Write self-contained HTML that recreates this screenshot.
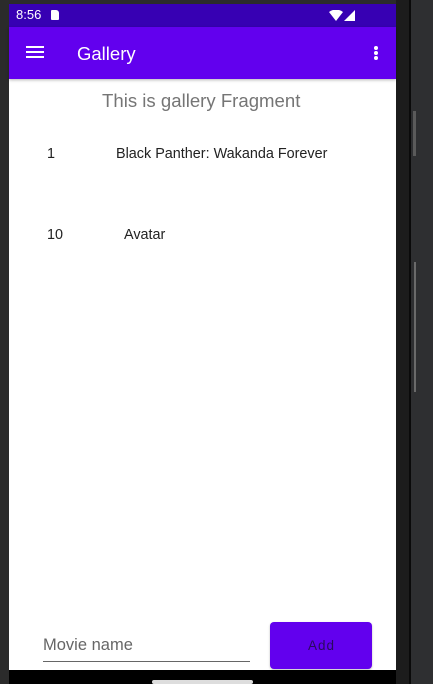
<!DOCTYPE html>
<html><head><style>
body{margin:0;width:433px;height:684px;background:#2b2b2b;position:relative;overflow:hidden;font-family:"Liberation Sans",Roboto,sans-serif}
div{position:absolute}
.t{white-space:nowrap}
</style></head><body>
<div style="left:0;top:0;width:9px;height:684px;background:#2b2b2b"></div>
<div style="left:396px;top:0;width:13px;height:684px;background:#1c1c1c"></div>
<div style="left:409px;top:0;width:2px;height:684px;background:#0a0a0a"></div>
<div style="left:411px;top:0;width:22px;height:684px;background:#2e2f31"></div>
<div style="left:413px;top:111px;width:3px;height:45px;background:#5a5a5a"></div>
<div style="left:414px;top:262px;width:2px;height:130px;background:#6a6a6a"></div>
<div style="left:9px;top:4px;width:387px;height:666px;background:#fff"></div>
<div style="left:9px;top:4px;width:387px;height:23px;background:#3700b3"></div>
<div class="t" style="left:16px;top:7px;color:#fff;font-size:13px">8:56</div>
<div style="left:51px;top:10px;width:8px;height:10px;background:#fff;border-radius:1px 3px 1px 1px"></div>
<svg style="position:absolute;left:329px;top:10px" width="28" height="12"><path d="M0 2 Q7 -3 14 2 L7 11Z" fill="#fff"/><path d="M26 0 L26 11 L15 11Z" fill="#fff"/></svg>
<div style="left:9px;top:27px;width:387px;height:52px;background:#6200ee;box-shadow:0 1px 3px rgba(0,0,0,.3)"></div>
<div style="left:26px;top:46px;width:18px;height:2px;background:#fff;box-shadow:0 5px 0 #fff,0 10px 0 #fff"></div>
<div class="t" style="left:77px;top:43px;color:#fff;font-size:18.5px">Gallery</div>
<div style="left:374px;top:46px;width:4px;height:4px;border-radius:2px;background:#fff;box-shadow:0 5px 0 #fff,0 10px 0 #fff"></div>
<div class="t" style="left:102px;top:90px;color:#757575;font-size:18.6px">This is gallery Fragment</div>
<div class="t" style="left:47px;top:146px;color:#222;font-size:14.4px">1</div>
<div class="t" style="left:116px;top:146px;color:#222;font-size:14.4px">Black Panther: Wakanda Forever</div>
<div class="t" style="left:47px;top:227px;color:#222;font-size:14.4px">10</div>
<div class="t" style="left:124px;top:227px;color:#222;font-size:14.4px">Avatar</div>
<div class="t" style="left:43px;top:636px;color:#666;font-size:16.5px">Movie name</div>
<div style="left:43px;top:661px;width:207px;height:1px;background:#666"></div>
<div style="left:270px;top:622px;width:102px;height:47px;background:#6200ee;border-radius:4px;box-shadow:0 1px 2px rgba(0,0,0,.25)"></div>
<div class="t" style="left:308px;top:638px;color:#2a0a5e;font-size:13.5px;letter-spacing:1px">Add</div>
<div style="left:9px;top:670px;width:387px;height:14px;background:#000"></div>
<div style="left:152px;top:680px;width:101px;height:4px;background:#ddd;border-radius:2px"></div>
</body></html>
